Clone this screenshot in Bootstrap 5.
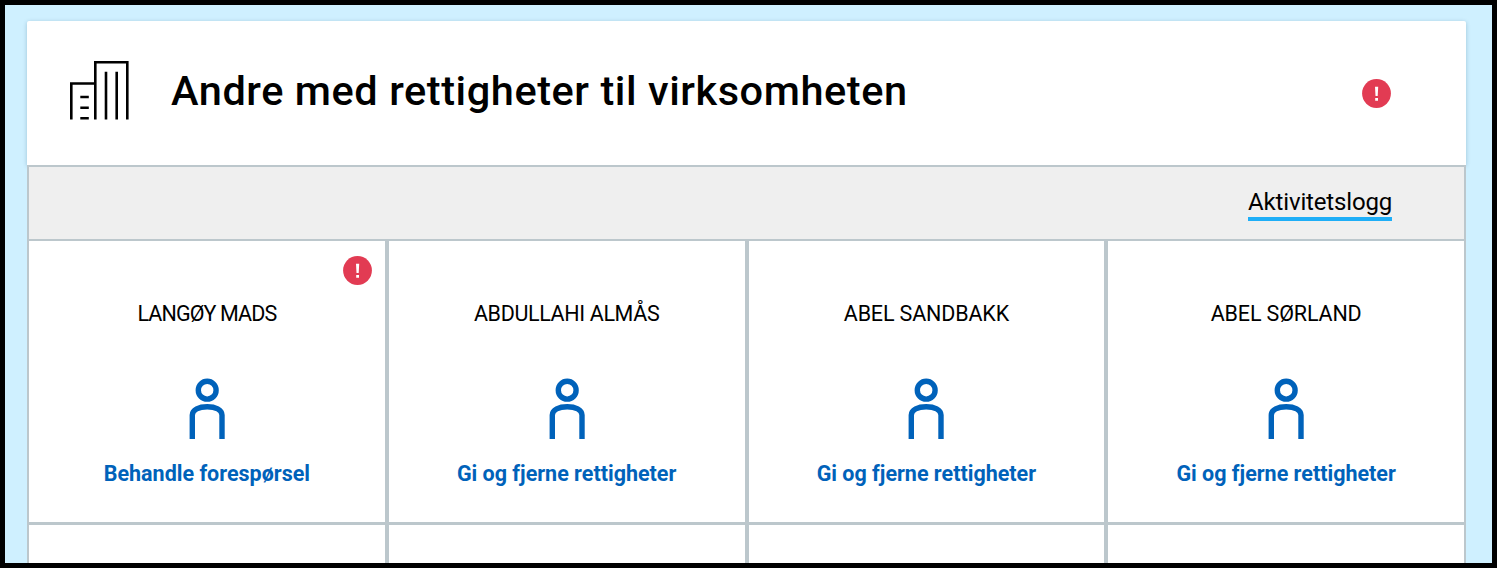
<!DOCTYPE html>
<html lang="nb">
<head>
<meta charset="utf-8">
<meta name="viewport" content="width=device-width, initial-scale=1">
<title>Andre med rettigheter til virksomheten</title>
<link href="https://cdn.jsdelivr.net/npm/bootstrap@5.3.0/dist/css/bootstrap.min.css" rel="stylesheet">
<style>
  body { font-family: Roboto, "Liberation Sans", sans-serif; color: #000; background: #cff0ff; }
  .frame { height: 568px; border: 5px solid #000; padding: 16px 26px 0 22px; }
  .panel-head { height: 144px; padding: 0 75px 0 42px; border-radius: 2px 2px 0 0; box-shadow: 0 1px 4px rgba(0, 60, 90, .25); }
  .panel-title { font-size: 41.5px; font-weight: 500; letter-spacing: .56px; line-height: 50px; margin: 0 0 5px 42px; }
  .building { margin-bottom: 6px; }
  .alert-dot { width: 29px; height: 29px; display: block; }
  .toolbar { height: 75px; background: #efefef; border: 2px solid #bcc7cc; border-bottom-width: 1px; padding: 0 72px 0 0; }
  .log-link { font-size: 24px; font-weight: 400; letter-spacing: -.15px; line-height: 30px; color: #000; border-bottom: 4px solid #1eaef7; width: 144px; height: 34px; margin-top: 1px; white-space: nowrap; }
  .person { height: 284px; border: 2px solid #bcc7cc; border-top-width: 1px; position: relative; padding-top: 57px; }
  .person-name { font-size: 21.5px; font-weight: 400; letter-spacing: -.15px; line-height: 32px; white-space: nowrap; }
  .person-icon { width: 36px; height: 61px; margin: 48px 0 0; display: block; }
  .person-action { font-size: 21.5px; font-weight: 700; line-height: 32px; color: #0062ba; margin-top: 19px; white-space: nowrap; }
  .person .alert-dot { position: absolute; top: 15px; right: 13px; }
  .person-name.tight { letter-spacing: -.9px; }
  .person-name.snug { letter-spacing: -.36px; }
</style>
</head>
<body>
<svg class="d-none" xmlns="http://www.w3.org/2000/svg">
  <symbol id="person" viewBox="0 0 36 61">
    <g fill="none" stroke="#0062ba" stroke-width="5.400">
      <circle cx="18.200" cy="12.200" r="8.900"/>
      <path d="M3.300 61V37C3.300 31.500 10 28.700 18.200 28.700S33 31.500 33 37V61"/>
    </g>
  </symbol>
  <symbol id="alert" viewBox="0 0 29 29">
    <circle cx="14.500" cy="14.500" r="14.400" fill="#e23b53"/>
    <path d="M13 7.800h3.200l-.5 9.200h-2.200zM13.200 18.900h2.800v2.900h-2.800z" fill="#fff"/>
  </symbol>
</svg>
<div class="frame overflow-hidden">
  <header class="panel-head bg-white d-flex align-items-center">
    <svg class="building" width="60" height="60" viewBox="0 0 60 60" fill="none" stroke="#000" stroke-width="2.600" aria-hidden="true">
      <path d="M2.300 59.500V23.500H26.300M26.300 59.500V2.300H58.300V59.500M37 59.500V11.700M47.700 59.500V11.700M11.300 37h8.500M11.300 47.700h8.500M11.300 58.300h8.500"/>
    </svg>
    <h1 class="panel-title text-nowrap">Andre med rettigheter til virksomheten</h1>
    <svg class="alert-dot ms-auto"><use href="#alert"/></svg>
  </header>
  <main>
    <div class="toolbar d-flex justify-content-end align-items-center">
      <a href="#" class="log-link text-decoration-none">Aktivitetslogg</a>
    </div>
    <div class="row g-0">
      <div class="col-3"><div class="person bg-white d-flex flex-column align-items-center">
        <svg class="alert-dot"><use href="#alert"/></svg>
        <div class="person-name tight">LANGØY MADS</div>
        <svg class="person-icon"><use href="#person"/></svg>
        <div class="person-action">Behandle forespørsel</div>
      </div></div>
      <div class="col-3"><div class="person bg-white d-flex flex-column align-items-center">
        <div class="person-name snug">ABDULLAHI ALMÅS</div>
        <svg class="person-icon"><use href="#person"/></svg>
        <div class="person-action">Gi og fjerne rettigheter</div>
      </div></div>
      <div class="col-3"><div class="person bg-white d-flex flex-column align-items-center">
        <div class="person-name">ABEL SANDBAKK</div>
        <svg class="person-icon"><use href="#person"/></svg>
        <div class="person-action">Gi og fjerne rettigheter</div>
      </div></div>
      <div class="col-3"><div class="person bg-white d-flex flex-column align-items-center">
        <div class="person-name">ABEL SØRLAND</div>
        <svg class="person-icon"><use href="#person"/></svg>
        <div class="person-action">Gi og fjerne rettigheter</div>
      </div></div>
      <div class="col-3"><div class="person bg-white"></div></div>
      <div class="col-3"><div class="person bg-white"></div></div>
      <div class="col-3"><div class="person bg-white"></div></div>
      <div class="col-3"><div class="person bg-white"></div></div>
    </div>
  </main>
</div>
<script src="https://cdn.jsdelivr.net/npm/bootstrap@5.3.0/dist/js/bootstrap.bundle.min.js"></script>
</body>
</html>
